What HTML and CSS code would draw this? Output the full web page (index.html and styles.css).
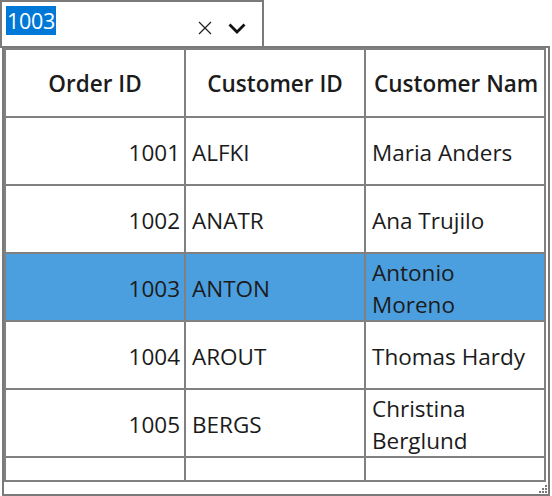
FILE: index.html
```html
<!DOCTYPE html>
<html>
<head>
<meta charset="utf-8">
<link rel="stylesheet" href="styles.css">
</head>
<body>
<div class="combo">
  <span class="sel">1003</span>
  <span class="icons">
    <svg class="clear" width="14" height="14" viewBox="0 0 14 14"><path d="M1 1 L13 13 M13 1 L1 13" stroke="#1f1f1f" stroke-width="1.2" fill="none"/></svg>
    <svg class="chev" width="18" height="11" viewBox="0 0 18 11"><path d="M1.5 1.5 L9 9 L16.5 1.5" stroke="#111" stroke-width="2.8" fill="none"/></svg>
  </span>
</div>
<div class="popup">
  <div class="grid">
    <div class="c h">Order ID</div><div class="c h">Customer ID</div><div class="c h clip">Customer Nam</div>
    <div class="c n">1001</div><div class="c">ALFKI</div><div class="c">Maria Anders</div>
    <div class="c n">1002</div><div class="c">ANATR</div><div class="c">Ana Trujilo</div>
    <div class="c n s">1003</div><div class="c s">ANTON</div><div class="c s">Antonio Moreno</div>
    <div class="c n">1004</div><div class="c">AROUT</div><div class="c">Thomas Hardy</div>
    <div class="c n">1005</div><div class="c">BERGS</div><div class="c">Christina Berglund</div>
    <div class="c p"></div><div class="c p"></div><div class="c p"></div>
  </div>
  <svg class="grip" width="8" height="8" viewBox="0 0 8 8" fill="#777"><rect x="6" y="0" width="2" height="2"/><rect x="3" y="3" width="2" height="2"/><rect x="6" y="3" width="2" height="2"/><rect x="0" y="6" width="2" height="2"/><rect x="3" y="6" width="2" height="2"/><rect x="6" y="6" width="2" height="2"/></svg>
</div>
</body>
</html>
```
FILE: styles.css
```css
html, body {
  margin: 0;
  padding: 0;
  background: #fff;
}
body {
  width: 552px;
  height: 496px;
  overflow: hidden;
  font-family: "Open Sans", "Noto Sans", sans-serif;
  color: #1b1b1b;
}
.combo {
  box-sizing: border-box;
  width: 264px;
  height: 48px;
  border: 2px solid #7a7a7a;
  display: flex;
  align-items: flex-start;
  padding: 4px 0 0 4px;
  position: relative;
}
.sel {
  background: #0078d7;
  color: #fff;
  font-size: 21.5px;
  line-height: 29px;
  height: 29px;
  padding: 0 1px;
  letter-spacing: -0.3px;
}
.icons {
  margin-left: auto;
  display: flex;
  align-items: center;
  gap: 16px;
  padding: 15px 16px 0 0;
}
.popup {
  box-sizing: border-box;
  margin-top: -2px;
  margin-left: 2px;
  width: 548px;
  height: 450px;
  border: 2px solid #7a7a7a;
  position: relative;
  overflow: hidden;
}
.grid {
  display: grid;
  grid-template-columns: 180px 180px 180px;
  grid-template-rows: 68px 68px 68px 68px 68px 68px 24px;
  border-left: 2px solid #808080;
  border-top: 2px solid #808080;
  width: 542px;
  box-sizing: border-box;
}
.c {
  box-sizing: border-box;
  border-right: 2px solid #808080;
  border-bottom: 2px solid #808080;
  font-size: 22.5px;
  line-height: 32px;
  display: flex;
  align-items: center;
  padding: 3px 6px 0;
  overflow: hidden;
  white-space: normal;
}
.h {
  font-weight: 600;
  font-size: 22.5px;
  justify-content: center;
  white-space: nowrap;
  padding: 2px 4px 0;
}
.clip {
  justify-content: flex-start;
  padding-left: 8px;
}
.n {
  justify-content: flex-end;
  padding-right: 4px;
}
.s {
  background: #4c9fdf;
}
.p {
  padding: 0;
}
.grip {
  position: absolute;
  right: 1px;
  bottom: 1px;
}
```
